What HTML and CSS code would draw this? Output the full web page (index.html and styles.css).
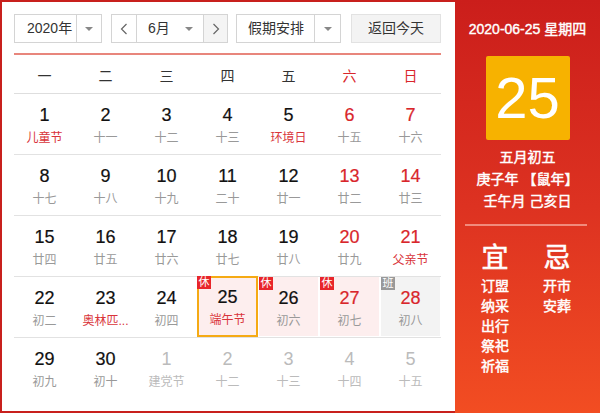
FILE: index.html
```html
<!DOCTYPE html>
<html lang="zh-CN">
<head>
<meta charset="utf-8">
<title>万年历</title>
<link rel="stylesheet" href="styles.css">
</head>
<body>
<div class="cal">
  <div class="main">
    <div class="toolbar">
      <div class="sel year"><span class="val">2020年</span><span class="drop"><i class="tri"></i></span></div>
      <div class="sel month">
        <span class="nav"><svg width="8" height="12" viewBox="0 0 8 12"><polyline points="6.5,1 1.5,6 6.5,11" fill="none" stroke="#666" stroke-width="1.2"/></svg></span>
        <span class="val mval">6月<i class="tri"></i></span>
        <span class="nav next"><svg width="8" height="12" viewBox="0 0 8 12"><polyline points="1.5,1 6.5,6 1.5,11" fill="none" stroke="#666" stroke-width="1.2"/></svg></span>
      </div>
      <div class="sel holiday"><span class="val">假期安排</span><span class="drop"><i class="tri"></i></span></div>
      <div class="btn">返回今天</div>
    </div>
    <div class="rule"></div>
    <div class="week">
      <span>一</span><span>二</span><span>三</span><span>四</span><span>五</span><span class="we">六</span><span class="we">日</span>
    </div>
    <div class="grid">
      <div class="day"><div class="box"><b>1</b><em class="fest">儿童节</em></div></div>
      <div class="day"><div class="box"><b>2</b><em>十一</em></div></div>
      <div class="day"><div class="box"><b>3</b><em>十二</em></div></div>
      <div class="day"><div class="box"><b>4</b><em>十三</em></div></div>
      <div class="day"><div class="box"><b>5</b><em class="fest">环境日</em></div></div>
      <div class="day wkd"><div class="box"><b>6</b><em>十五</em></div></div>
      <div class="day wkd"><div class="box"><b>7</b><em>十六</em></div></div>

      <div class="day"><div class="box"><b>8</b><em>十七</em></div></div>
      <div class="day"><div class="box"><b>9</b><em>十八</em></div></div>
      <div class="day"><div class="box"><b>10</b><em>十九</em></div></div>
      <div class="day"><div class="box"><b>11</b><em>二十</em></div></div>
      <div class="day"><div class="box"><b>12</b><em>廿一</em></div></div>
      <div class="day wkd"><div class="box"><b>13</b><em>廿二</em></div></div>
      <div class="day wkd"><div class="box"><b>14</b><em>廿三</em></div></div>

      <div class="day"><div class="box"><b>15</b><em>廿四</em></div></div>
      <div class="day"><div class="box"><b>16</b><em>廿五</em></div></div>
      <div class="day"><div class="box"><b>17</b><em>廿六</em></div></div>
      <div class="day"><div class="box"><b>18</b><em>廿七</em></div></div>
      <div class="day"><div class="box"><b>19</b><em>廿八</em></div></div>
      <div class="day wkd"><div class="box"><b>20</b><em>廿九</em></div></div>
      <div class="day wkd"><div class="box"><b>21</b><em class="fest">父亲节</em></div></div>

      <div class="day"><div class="box"><b>22</b><em>初二</em></div></div>
      <div class="day"><div class="box"><b>23</b><em class="fest">奥林匹...</em></div></div>
      <div class="day"><div class="box"><b>24</b><em>初四</em></div></div>
      <div class="day"><div class="box rest today"><span class="tag">休</span><b>25</b><em class="fest">端午节</em></div></div>
      <div class="day"><div class="box rest"><span class="tag">休</span><b>26</b><em>初六</em></div></div>
      <div class="day wkd"><div class="box rest"><span class="tag">休</span><b>27</b><em>初七</em></div></div>
      <div class="day wkd"><div class="box work"><span class="tag grey">班</span><b>28</b><em>初八</em></div></div>

      <div class="day last"><div class="box"><b>29</b><em>初九</em></div></div>
      <div class="day last"><div class="box"><b>30</b><em>初十</em></div></div>
      <div class="day last other"><div class="box"><b>1</b><em>建党节</em></div></div>
      <div class="day last other"><div class="box"><b>2</b><em>十二</em></div></div>
      <div class="day last other"><div class="box"><b>3</b><em>十三</em></div></div>
      <div class="day last other"><div class="box"><b>4</b><em>十四</em></div></div>
      <div class="day last other"><div class="box"><b>5</b><em>十五</em></div></div>
    </div>
  </div>
  <div class="side">
    <div class="date">2020-06-25 星期四</div>
    <div class="big">25</div>
    <div class="lunar">
      <div>五月初五</div>
      <div>庚子年 【鼠年】</div>
      <div>壬午月 己亥日</div>
    </div>
    <div class="sep"></div>
    <div class="yiji">
      <div class="col">
        <div class="head">宜</div>
        <div>订盟</div><div>纳采</div><div>出行</div><div>祭祀</div><div>祈福</div>
      </div>
      <div class="col">
        <div class="head">忌</div>
        <div>开市</div><div>安葬</div>
      </div>
    </div>
  </div>
</div>
</body>
</html>
```

FILE: styles.css
```css
* { box-sizing: border-box; }
html, body { margin: 0; padding: 0; }
body {
  font-family: "Liberation Sans", "Noto Sans CJK SC", sans-serif;
  background: #fff;
}
.cal {
  width: 600px;
  height: 413px;
  display: flex;
  overflow: hidden;
}
.main {
  width: 455px;
  height: 413px;
  border: 2px solid #c8201d;
  border-right: none;
  padding: 12px 0 0 12px;
}
.toolbar {
  display: flex;
  height: 29px;
  width: 427px;
}
.sel {
  display: flex;
  height: 29px;
  border: 1px solid #d4d4d4;
  font-size: 14px;
  color: #333;
  line-height: 27px;
}
.year { width: 88px; }
.year .val { width: 61px; padding-left: 12px; }
.month { width: 117px; margin-left: 9px; }
.holiday { width: 105px; margin-left: 8px; }
.holiday .val { width: 77px; padding-left: 11px; }
.drop {
  flex: 1;
  border-left: 1px solid #d4d4d4;
  display: flex;
  align-items: center;
  justify-content: center;
}
.tri {
  display: inline-block;
  width: 0;
  height: 0;
  border-left: 4px solid transparent;
  border-right: 4px solid transparent;
  border-top: 4px solid #888;
}
.nav {
  width: 25px;
  display: flex;
  align-items: center;
  justify-content: center;
  border-right: 1px solid #d4d4d4;
}
.nav.next {
  width: 24px;
  border-right: none;
  border-left: 1px solid #d4d4d4;
  background: #f4f4f4;
}
.mval {
  flex: 1;
  display: flex;
  align-items: center;
  justify-content: space-between;
  padding: 0 10px 0 11px;
}
.btn {
  margin-left: 10px;
  width: 90px;
  height: 29px;
  background: #f3f3f3;
  border: 1px solid #e2e2e2;
  font-size: 14px;
  color: #333;
  line-height: 27px;
  text-align: center;
}
.rule {
  width: 427px;
  height: 2px;
  margin-top: 10px;
  background: #e8867c;
}
.week {
  width: 427px;
  height: 39px;
  display: grid;
  grid-template-columns: repeat(7, 61px);
  align-items: center;
  border-bottom: 1px solid #dedede;
  font-size: 14px;
  color: #333;
  text-align: center;
  padding-top: 1px;
}
.week .we { color: #d9262b; }
.grid {
  width: 427px;
  display: grid;
  grid-template-columns: repeat(7, 61px);
}
.day {
  height: 61px;
  border-bottom: 1px solid #e2e2e2;
}
.day.last { border-bottom: none; }
.box {
  position: relative;
  height: 59px;
  margin: 0 1px;
  display: flex;
  flex-direction: column;
  align-items: center;
  padding-top: 12px;
}
.box b {
  font-weight: normal;
  font-size: 18px;
  line-height: 18px;
  color: #111;
  -webkit-text-stroke: 0.2px currentColor;
}
.box em {
  font-style: normal;
  font-size: 12px;
  line-height: 16px;
  margin-top: 6px;
  color: #999;
  white-space: nowrap;
}
.box em.fest { color: #d9343a; }
.wkd .box b { color: #d9262b; }
.other .box b { color: #bbb; -webkit-text-stroke: 0; }
.other .box em { color: #bbb; }
.rest { background: #fdeeee; }
.work { background: #f3f3f3; }
.today {
  border: 2px solid #f5aa14;
  padding-top: 10px;
  margin: -1px 0 0 0;
  height: 61px;
}
.tag {
  position: absolute;
  left: 0;
  top: 0;
  width: 14px;
  height: 13px;
  background: #e8252a;
  color: #fff;
  font-size: 11px;
  line-height: 13px;
  text-align: center;
}
.today .tag { left: -2px; top: -2px; }
.tag.grey { background: #999; }
.side {
  width: 145px;
  height: 413px;
  background: linear-gradient(to bottom, #cb1e1b 0%, #dd3221 50%, #f24d22 100%);
  color: #fff;
  display: flex;
  flex-direction: column;
}
.date {
  margin-top: 19px;
  height: 20px;
  line-height: 20px;
  font-size: 14px;
  -webkit-text-stroke: 0.4px #fff;
  text-align: center;
}
.big {
  margin: 17px auto 0 auto;
  width: 84px;
  height: 84px;
  background: #f7b200;
  border-radius: 2px;
  text-align: center;
  line-height: 84px;
  font-size: 58px;
  color: #fff;
}
.lunar {
  margin-top: 6px;
  font-size: 14px;
  -webkit-text-stroke: 0.45px #fff;
  line-height: 22px;
  text-align: center;
}
.sep {
  margin: 12px 13px 0 10px;
  height: 2px;
  background: rgba(255, 210, 200, 0.55);
}
.yiji {
  display: flex;
  padding-left: 15px;
  gap: 12px;
  margin-top: 17px;
}
.col {
  width: 50px;
  text-align: center;
  font-size: 14px;
  -webkit-text-stroke: 0.45px #fff;
  line-height: 20px;
}
.col .head {
  font-size: 27px;
  line-height: 30px;
  margin-bottom: 3px;
  -webkit-text-stroke: 0.6px #fff;
}
```
